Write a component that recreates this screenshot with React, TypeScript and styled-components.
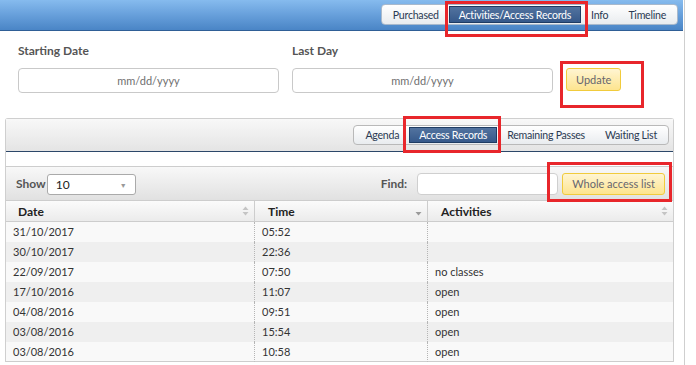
import styled, { createGlobalStyle } from 'styled-components';

const GlobalStyle = createGlobalStyle`
  html, body { margin: 0; padding: 0; background: #fff; }
  body {
    font-family: Lato, "Open Sans", sans-serif;
    font-size: 11px;
    color: #333;
  }
  * { box-sizing: border-box; }
`;

type Record = { date: string; time: string; activity: string };

const records: Record[] = [
  { date: '31/10/2017', time: '05:52', activity: '' },
  { date: '30/10/2017', time: '22:36', activity: '' },
  { date: '22/09/2017', time: '07:50', activity: 'no classes' },
  { date: '17/10/2016', time: '11:07', activity: 'open' },
  { date: '04/08/2016', time: '09:51', activity: 'open' },
  { date: '03/08/2016', time: '15:54', activity: 'open' },
  { date: '03/08/2016', time: '10:58', activity: 'open' },
];

const topTabs = ['Purchased', 'Activities/Access Records', 'Info', 'Timeline'];
const subTabs = ['Agenda', 'Access Records', 'Remaining Passes', 'Waiting List'];

// red annotation boxes drawn over the screenshot
const marks = [
  { left: 445, top: 1, width: 143, height: 36 },
  { left: 560, top: 61, width: 84, height: 47 },
  { left: 403, top: 116, width: 98, height: 37 },
  { left: 547, top: 162, width: 125, height: 40 },
];

function SortIcon({ both }: { both: boolean }) {
  return (
    <svg width="7" height="10" viewBox="0 0 7 10">
      {both && <path d="M3.5 0.5 L6.5 4 L0.5 4 Z" fill="#c4c4c4" />}
      <path d="M0.5 6 L6.5 6 L3.5 9.5 Z" fill={both ? '#c4c4c4' : '#9a9a9a'} />
    </svg>
  );
}

export default function App() {
  return (
    <Shell>
      <GlobalStyle />
      <Main>
        <TopBar>
          <TabGroup>
            {topTabs.map((t, i) => (
              <Tab key={t} $active={i === 1}>
                {t}
              </Tab>
            ))}
          </TabGroup>
        </TopBar>

        <DateForm>
          <Field>
            <Label>Starting Date</Label>
            <DateInput placeholder="mm/dd/yyyy" />
          </Field>
          <Field>
            <Label>Last Day</Label>
            <DateInput placeholder="mm/dd/yyyy" />
          </Field>
          <YellowButton $tall>Update</YellowButton>
        </DateForm>

        <Panel>
          <PanelHead>
            <TabGroup $small>
              {subTabs.map((t, i) => (
                <Tab key={t} $active={i === 1} $small>
                  {t}
                </Tab>
              ))}
            </TabGroup>
          </PanelHead>
          <Strip />
          <Toolbar>
            <ToolLabel>Show</ToolLabel>
            <Select>
              <span>10</span>
              <Caret>▼</Caret>
            </Select>
            <Grow />
            <ToolLabel>Find:</ToolLabel>
            <FindInput />
            <YellowButton>Whole access list</YellowButton>
          </Toolbar>
          <Table>
            <HeadCell>
              Date
              <SortIcon both />
            </HeadCell>
            <HeadCell $divided>
              Time
              <SortIcon both={false} />
            </HeadCell>
            <HeadCell $divided>
              Activities
              <SortIcon both />
            </HeadCell>
            {records.map((r, i) => (
              <Row key={i} $odd={i % 2 === 0}>
                <Cell>{r.date}</Cell>
                <Cell $divided>{r.time}</Cell>
                <Cell $divided>{r.activity}</Cell>
              </Row>
            ))}
          </Table>
        </Panel>

        {marks.map((m, i) => (
          <Mark key={i} style={{ left: m.left, top: m.top, width: m.width, height: m.height }} />
        ))}
      </Main>
      <Edge />
    </Shell>
  );
}

const Shell = styled.div`
  display: flex;
  height: 365px;
  overflow: hidden;
`;

const Main = styled.div`
  position: relative;
  width: 683px;
`;

const Edge = styled.div`
  width: 1px;
  margin-left: 1px;
  background: #cfcfcf;
`;

const TopBar = styled.div`
  height: 31px;
  display: flex;
  justify-content: flex-end;
  align-items: flex-start;
  padding: 4px 5px 0 0;
  background: linear-gradient(to bottom, #86bbee 0%, #6aa2dd 45%, #4a85c6 100%);
  border-bottom: 1px solid #2f5f96;
`;

const TabGroup = styled.div<{ $small?: boolean }>`
  display: flex;
  align-items: center;
  height: ${(p) => (p.$small ? 20 : 21)}px;
  padding: 0 1px;
  background: linear-gradient(to bottom, #ffffff, #e9ecef);
  border: 1px solid ${(p) => (p.$small ? '#b9b9b9' : '#a8b9cc')};
  border-radius: 4px;
`;

const Tab = styled.div<{ $active: boolean; $small?: boolean }>`
  height: ${(p) => (p.$small ? 16 : 17)}px;
  line-height: ${(p) => (p.$small ? 15 : 16)}px;
  padding: 0 9px;
  font-size: 10.6px;
  letter-spacing: -0.25px;
  white-space: nowrap;
  color: ${(p) => (p.$active ? '#fff' : '#2b3a52')};
  background: ${(p) => (p.$active ? 'linear-gradient(to bottom, #52739f, #36598a)' : 'transparent')};
  border: 1px solid ${(p) => (p.$active ? '#1f3c63' : 'transparent')};
`;

const DateForm = styled.div`
  display: flex;
  align-items: flex-end;
  gap: 13px;
  padding: 12px 18px 0;
`;

const Field = styled.div`
  display: flex;
  flex-direction: column;
  gap: 9px;
`;

const Label = styled.div`
  font-size: 12px;
  font-weight: bold;
  line-height: 16px;
  color: #555;
`;

const DateInput = styled.input`
  width: 261px;
  height: 25px;
  border: 1px solid #c9c9c9;
  border-radius: 4px;
  text-align: center;
  font: 11px Lato, sans-serif;
  &::placeholder { color: #6f6f6f; }
`;

const YellowButton = styled.button<{ $tall?: boolean }>`
  height: ${(p) => (p.$tall ? 23 : 22)}px;
  margin-bottom: ${(p) => (p.$tall ? 2 : 0)}px;
  padding: 0 9px;
  font: 11px Lato, sans-serif;
  color: #66666f;
  background: linear-gradient(to bottom, #fff5d2, #fde48f);
  border: 1px solid #f1cb3c;
  border-radius: 3px;
  white-space: nowrap;
`;

const Panel = styled.div`
  margin: 25px 9px 0 5px;
  border: 1px solid #cfcfcf;
  border-bottom: none;
  border-radius: 3px 3px 0 0;
`;

const PanelHead = styled.div`
  height: 33px;
  display: flex;
  justify-content: flex-end;
  align-items: flex-start;
  padding: 6px 4px 0 0;
  background: linear-gradient(to bottom, #f8f8f8, #e4e4e4);
  border-bottom: 1px solid #2c4769;
`;

const Strip = styled.div`
  height: 15px;
  background: #fff;
  border-bottom: 1px solid #cdcdcd;
`;

const Toolbar = styled.div`
  height: 33px;
  display: flex;
  align-items: center;
  padding: 0 8px 0 10px;
  background: linear-gradient(to bottom, #f8f8f8, #e1e1e1);
`;

const ToolLabel = styled.span`
  font-size: 12px;
  font-weight: bold;
  color: #555;
  margin-right: 1px;
  & + input { margin-left: 9px; }
`;

const Select = styled.div`
  width: 89px;
  height: 21px;
  margin-top: 2px;
  display: flex;
  align-items: center;
  justify-content: space-between;
  padding: 0 8px;
  background: #fff;
  border: 1px solid #aaa;
  border-radius: 3px;
  font-size: 12px;
  color: #222;
`;

const Caret = styled.span`
  font-size: 7px;
  color: #999;
`;

const Grow = styled.div`
  flex: 1;
`;

const FindInput = styled.input`
  width: 141px;
  height: 22px;
  margin-right: 4px;
  border: 1px solid #cfcfcf;
  border-radius: 4px;
  background: #fff;
`;

const Table = styled.div`
  display: grid;
  grid-template-columns: 248px 173px 1fr;
`;

const HeadCell = styled.div<{ $divided?: boolean }>`
  height: 22px;
  display: flex;
  align-items: center;
  justify-content: space-between;
  padding: 0 5px 0 ${(p) => (p.$divided ? 13 : 12)}px;
  font-size: 12px;
  font-weight: bold;
  color: #222;
  background: linear-gradient(to bottom, #fbfbfb, #ebebeb);
  border-top: 1px solid #cdcdcd;
  border-bottom: 1px solid #cdcdcd;
  border-left: ${(p) => (p.$divided ? '1px solid #cdcdcd' : 'none')};
`;

const Row = styled.div<{ $odd: boolean }>`
  display: contents;
  & > div { background: ${(p) => (p.$odd ? '#f9f9f9' : '#efefef')}; }
  &:last-child > div { border-bottom: 1px solid #cdcdcd; }
`;

const Cell = styled.div<{ $divided?: boolean }>`
  height: 20px;
  line-height: 20px;
  padding-left: 7px;
  font-size: 11px;
  color: #333;
  border-left: ${(p) => (p.$divided ? '1px dotted #b5b5b5' : 'none')};
`;

const Mark = styled.div`
  position: absolute;
  border: 3px solid #e8262b;
  pointer-events: none;
`;
